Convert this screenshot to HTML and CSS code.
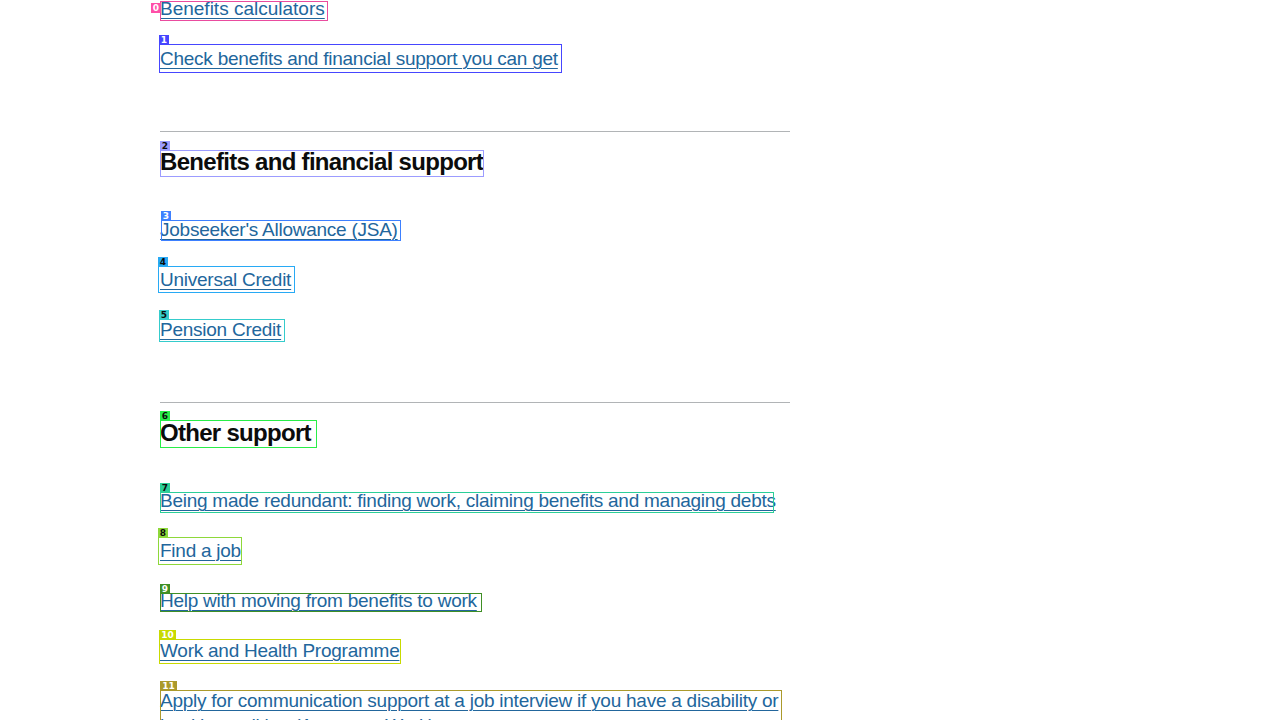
FILE: index.html
```html
<!DOCTYPE html>
<html lang="en">
<head>
<meta charset="utf-8">
<title>Benefits and financial support</title>
<link rel="stylesheet" href="styles.css">
</head>
<body>
<main class="page">
  <ul class="links first">
    <li><a href="#">Benefits calculators</a></li>
    <li><a href="#">Check benefits and financial support you can get</a></li>
  </ul>
  <section class="group">
    <h2 class="group-title">Benefits and financial support</h2>
    <ul class="links">
      <li><a href="#">Jobseeker's Allowance (JSA)</a></li>
      <li><a href="#">Universal Credit</a></li>
      <li><a href="#">Pension Credit</a></li>
    </ul>
  </section>
  <section class="group">
    <h2 class="group-title">Other support</h2>
    <ul class="links">
      <li><a href="#">Being made redundant: finding work, claiming benefits and managing debts</a></li>
      <li><a href="#">Find a job</a></li>
      <li><a href="#">Help with moving from benefits to work</a></li>
      <li><a href="#">Work and Health Programme</a></li>
      <li><a href="#">Apply for communication support at a job interview if you have a disability or health condition (Access to Work)</a></li>
    </ul>
  </section>
</main>
<div class="marks" aria-hidden="true">
  <div class="mark m0"><span class="tag">0</span></div>
  <div class="mark m1"><span class="tag">1</span></div>
  <div class="mark m2"><span class="tag">2</span></div>
  <div class="mark m3"><span class="tag">3</span></div>
  <div class="mark m4"><span class="tag">4</span></div>
  <div class="mark m5"><span class="tag">5</span></div>
  <div class="mark m6"><span class="tag">6</span></div>
  <div class="mark m7"><span class="tag">7</span></div>
  <div class="mark m8"><span class="tag">8</span></div>
  <div class="mark m9"><span class="tag">9</span></div>
  <div class="mark m10"><span class="tag">10</span></div>
  <div class="mark m11"><span class="tag">11</span></div>
</div>
</body>
</html>
```

FILE: styles.css
```css
html, body {
  margin: 0;
  padding: 0;
  background: #ffffff;
  overflow: hidden;
}
body {
  font-family: "Liberation Sans", Arial, sans-serif;
  color: #0b0c0c;
  height: 720px;
  position: relative;
}
.page {
  width: 630px;
  margin: -4px 0 0 160px;
}
.links {
  list-style: none;
  margin: 0;
  padding: 0;
}
.links li {
  font-size: 19px;
  line-height: 25px;
  margin: 0 0 25px 0;
  letter-spacing: -0.25px;
}
.first li:first-child {
  letter-spacing: 0;
}
.links li:last-child {
  margin-bottom: 0;
}
.links a {
  color: #22669c;
  text-decoration: underline;
  text-decoration-thickness: 1px;
  text-underline-offset: 3px;
}
.group {
  border-top: 1px solid #b1b4b6;
  margin-top: 60px;
  padding-top: 15px;
}
.group-title {
  font-size: 24px;
  line-height: 30px;
  font-weight: 700;
  margin: 0 0 40px 0;
  letter-spacing: -0.7px;
}

/* annotation overlay */
.marks {
  position: absolute;
  inset: 0;
  pointer-events: none;
}
.mark {
  position: absolute;
  box-sizing: border-box;
  border: 1px solid var(--c);
}
.tag {
  position: absolute;
  left: -1px;
  bottom: 100%;
  height: 10px;
  min-width: 10px;
  padding: 0 1px;
  box-sizing: border-box;
  background: var(--c);
  color: var(--t, #ffffff);
  font-family: "DejaVu Sans", sans-serif;
  font-size: 9px;
  line-height: 10px;
  font-weight: 700;
  text-align: center;
}
.m0 { --c: #ea4c9f; left: 160px; top: 1px; width: 168px; height: 20px; }
.m0 .tag { left: -10px; bottom: auto; top: 1px; background: #ff4fa8; }
.m1 { --c: #4646ff; left: 159px; top: 44px; width: 403px; height: 29px; }
.m2 { --c: #9c9cff; --t: #0b0c0c; left: 160px; top: 150px; width: 324px; height: 27px; }
.m3 { --c: #3d80ff; left: 161px; top: 220px; width: 240px; height: 21px; }
.m4 { --c: #28aaf5; --t: #0b0c0c; left: 158px; top: 266px; width: 137px; height: 27px; }
.m5 { --c: #35cccc; --t: #0b0c0c; left: 159px; top: 319px; width: 126px; height: 23px; }
.m6 { --c: #28ee48; --t: #0b0c0c; left: 160px; top: 420px; width: 157px; height: 28px; }
.m7 { --c: #2ccf98; --t: #0b0c0c; left: 160px; top: 492px; width: 614px; height: 21px; }
.m8 { --c: #8ed83a; --t: #0b0c0c; left: 158px; top: 537px; width: 84px; height: 28px; }
.m9 { --c: #3f8f25; left: 160px; top: 593px; width: 322px; height: 19px; }
.m10 { --c: #c8da00; left: 159px; top: 639px; width: 242px; height: 25px; }
.m10 .tag { min-width: 17px; }
.m11 { --c: #ab9a2c; left: 160px; top: 690px; width: 622px; height: 50px; }
.m11 .tag { min-width: 17px; }
```
